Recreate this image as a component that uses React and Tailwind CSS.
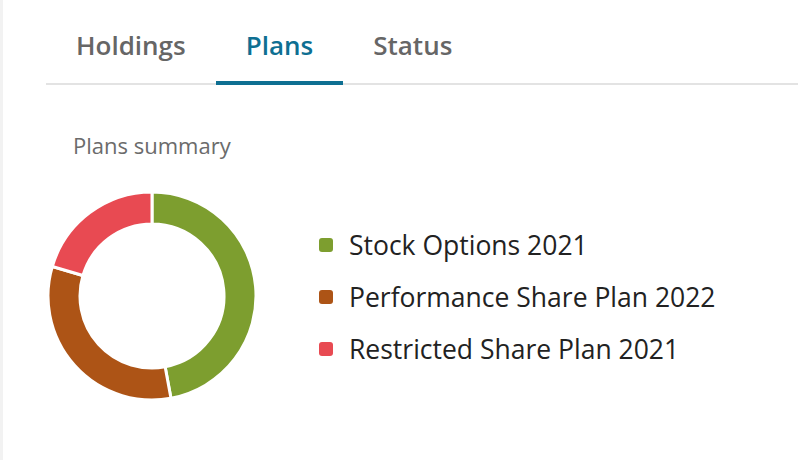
import React from 'react';

const FONT = { fontFamily: '"Open Sans", "Noto Sans", sans-serif' };

const plans = [
  { name: 'Stock Options 2021', color: '#7d9e2f', from: 0, to: 169.5 },
  { name: 'Performance Share Plan 2022', color: '#ad5416', from: 169.5, to: 286.5 },
  { name: 'Restricted Share Plan 2021', color: '#e84a52', from: 286.5, to: 360 },
];

// point on circle, angle in degrees clockwise from 12 o'clock
function pt(cx, cy, r, deg) {
  const a = ((deg - 90) * Math.PI) / 180;
  return [cx + r * Math.cos(a), cy + r * Math.sin(a)];
}

function arcPath(cx, cy, rOut, rIn, from, to) {
  const large = to - from > 180 ? 1 : 0;
  const [x1, y1] = pt(cx, cy, rOut, from);
  const [x2, y2] = pt(cx, cy, rOut, to);
  const [x3, y3] = pt(cx, cy, rIn, to);
  const [x4, y4] = pt(cx, cy, rIn, from);
  return `M${x1} ${y1} A${rOut} ${rOut} 0 ${large} 1 ${x2} ${y2} L${x3} ${y3} A${rIn} ${rIn} 0 ${large} 0 ${x4} ${y4} Z`;
}

function Donut() {
  return (
    <svg width="210" height="210" viewBox="0 0 210 210" className="shrink-0">
      {plans.map((p) => (
        <path
          key={p.name}
          d={arcPath(105, 105, 104, 72, p.from, p.to)}
          fill={p.color}
          stroke="#ffffff"
          strokeWidth="3"
        />
      ))}
    </svg>
  );
}

const tabs = ['Holdings', 'Plans', 'Status'];

export default function App() {
  return (
    <div className="w-[798px] h-[460px] bg-white flex overflow-hidden" style={FONT}>
      <div className="w-[3px] shrink-0 bg-[#f2f2f2]" />
      <div className="flex-1 pl-[43px]">
        <div className="flex border-b-2 border-[#e3e3e3] h-[85px]">
          {tabs.map((t) => {
            const active = t === 'Plans';
            return (
              <div
                key={t}
                className={`px-[30px] pt-[26px] text-[26px] font-semibold leading-[38px] -mb-[2px] ${
                  active
                    ? 'text-[#0e6f92] border-b-[4px] border-[#0e6f92]'
                    : 'text-[#666666]'
                }`}
              >
                {t}
              </div>
            );
          })}
        </div>

        <div className="pl-[27px] pt-[45px] text-[22px] leading-[30px] text-[#6b6b6b]">
          Plans summary
        </div>

        <div className="flex items-start mt-[31px] ml-[1px]">
          <Donut />
          <div className="ml-[62px] mt-[39px] flex flex-col gap-[22px]">
            {plans.map((p) => (
              <div key={p.name} className="flex items-center gap-[16px]">
                <span
                  className="w-[14px] h-[14px] rounded-[3px]"
                  style={{ backgroundColor: p.color }}
                />
                <span className="text-[26.5px] leading-[30px] text-[#222222] font-medium">
                  {p.name}
                </span>
              </div>
            ))}
          </div>
        </div>
      </div>
    </div>
  );
}
